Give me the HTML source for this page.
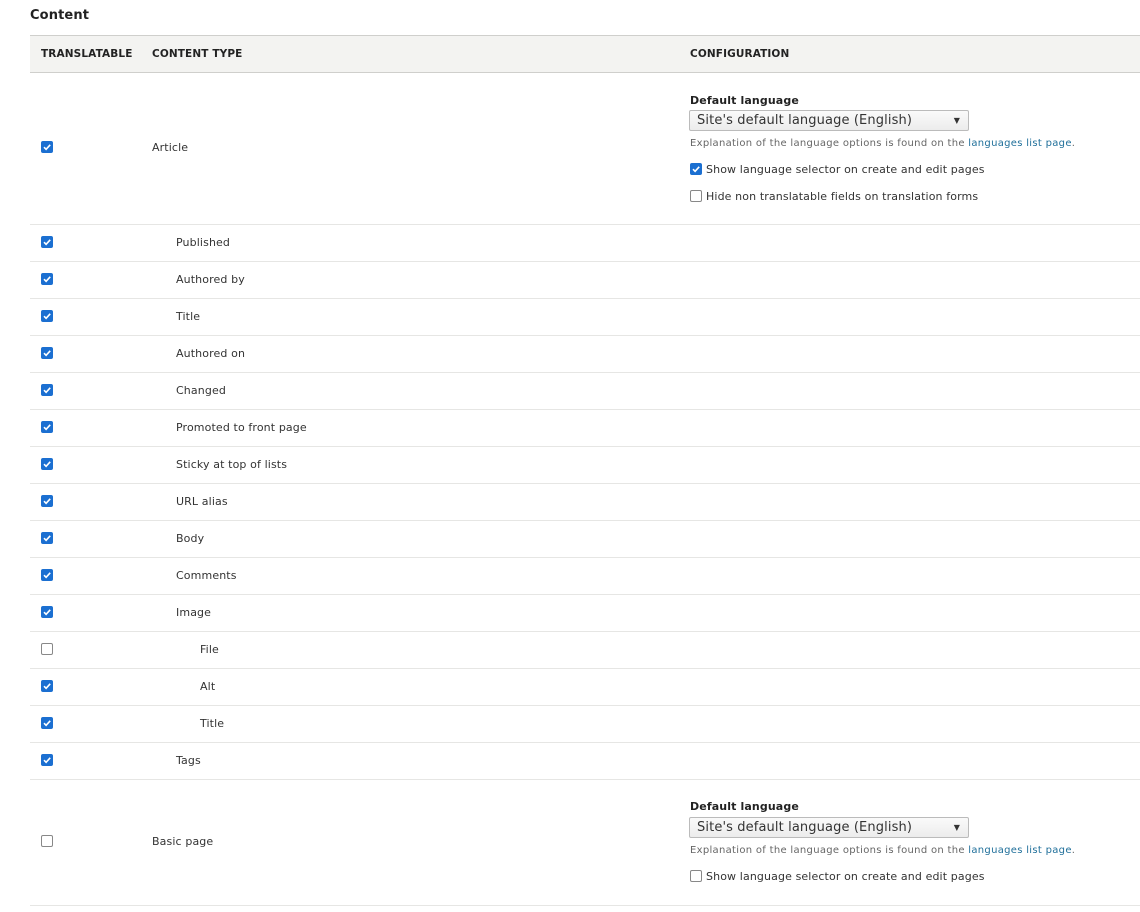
<!DOCTYPE html>
<html><head><meta charset="utf-8"><style>
*{margin:0;padding:0;box-sizing:border-box}
body{width:1140px;height:912px;background:#fff;position:relative;overflow:hidden;font-family:"DejaVu Sans","Liberation Sans",sans-serif;color:#333;font-size:11px;letter-spacing:.12px}
.a{position:absolute;white-space:nowrap;transform:translateY(1px)}
.line{position:absolute;left:30px;width:1110px;height:1px;background:#e6e6e4}
.cb{position:absolute;width:12px;height:12px;border-radius:2px}
.on{background:#1b6fd1}
.off{border:1px solid #888;background:#fff}
.sel{position:absolute;left:689px;width:280px;height:21px;border:1px solid #bbb;border-radius:2px;background:linear-gradient(#fafafa,#ececec);font-size:13px;padding:2px 0 0 7px;color:#333}
.sel:after{content:"▼";position:absolute;right:8px;top:5px;font-size:8px}
.desc{font-size:10px;color:#666;letter-spacing:.3px}
.desc b{font-weight:normal;color:#1f6f9a}
.h{font-weight:bold;font-size:10.5px;color:#222}
</style></head><body>
<div class="a" style="left:30px;top:7px;font-weight:bold;font-size:13px;color:#222">Content</div>
<div style="position:absolute;left:30px;top:35px;width:1110px;height:38px;background:#f3f3f1;border-top:1px solid #cfcfcc;border-bottom:1px solid #cfcfcc"></div>
<div class="a h" style="left:41px;top:47px">TRANSLATABLE</div>
<div class="a h" style="left:152px;top:47px">CONTENT TYPE</div>
<div class="a h" style="left:690px;top:47px">CONFIGURATION</div>

<svg width="0" height="0" style="position:absolute"><defs><symbol id="ck" viewBox="0 0 12 12"><path d="M3 6.2 L5.1 8.3 L9.2 3.8" fill="none" stroke="#fff" stroke-width="1.6"/></symbol></defs></svg>

<div class="cb on" style="left:41px;top:141px"><svg width="12" height="12"><use href="#ck"/></svg></div>
<div class="a" style="left:152px;top:140px">Article</div>
<div class="a h" style="left:690px;top:93px;font-size:11px">Default language</div>
<div class="sel" style="top:110px">Site's default language (English)</div>
<div class="a desc" style="left:690px;top:137px">Explanation of the language options is found on the <b>languages list page</b>.</div>
<div class="cb on" style="left:690px;top:163px"><svg width="12" height="12"><use href="#ck"/></svg></div>
<div class="a" style="left:706px;top:162px">Show language selector on create and edit pages</div>
<div class="cb off" style="left:690px;top:190px"></div>
<div class="a" style="left:706px;top:189px">Hide non translatable fields on translation forms</div>
<div class="line" style="top:224px"></div>

<div class="cb on" style="left:41px;top:236px"><svg width="12" height="12"><use href="#ck"/></svg></div><div class="a" style="left:176px;top:235px">Published</div><div class="line" style="top:261px"></div>
<div class="cb on" style="left:41px;top:273px"><svg width="12" height="12"><use href="#ck"/></svg></div><div class="a" style="left:176px;top:272px">Authored by</div><div class="line" style="top:298px"></div>
<div class="cb on" style="left:41px;top:310px"><svg width="12" height="12"><use href="#ck"/></svg></div><div class="a" style="left:176px;top:309px">Title</div><div class="line" style="top:335px"></div>
<div class="cb on" style="left:41px;top:347px"><svg width="12" height="12"><use href="#ck"/></svg></div><div class="a" style="left:176px;top:346px">Authored on</div><div class="line" style="top:372px"></div>
<div class="cb on" style="left:41px;top:384px"><svg width="12" height="12"><use href="#ck"/></svg></div><div class="a" style="left:176px;top:383px">Changed</div><div class="line" style="top:409px"></div>
<div class="cb on" style="left:41px;top:421px"><svg width="12" height="12"><use href="#ck"/></svg></div><div class="a" style="left:176px;top:420px">Promoted to front page</div><div class="line" style="top:446px"></div>
<div class="cb on" style="left:41px;top:458px"><svg width="12" height="12"><use href="#ck"/></svg></div><div class="a" style="left:176px;top:457px">Sticky at top of lists</div><div class="line" style="top:483px"></div>
<div class="cb on" style="left:41px;top:495px"><svg width="12" height="12"><use href="#ck"/></svg></div><div class="a" style="left:176px;top:494px">URL alias</div><div class="line" style="top:520px"></div>
<div class="cb on" style="left:41px;top:532px"><svg width="12" height="12"><use href="#ck"/></svg></div><div class="a" style="left:176px;top:531px">Body</div><div class="line" style="top:557px"></div>
<div class="cb on" style="left:41px;top:569px"><svg width="12" height="12"><use href="#ck"/></svg></div><div class="a" style="left:176px;top:568px">Comments</div><div class="line" style="top:594px"></div>
<div class="cb on" style="left:41px;top:606px"><svg width="12" height="12"><use href="#ck"/></svg></div><div class="a" style="left:176px;top:605px">Image</div><div class="line" style="top:631px"></div>
<div class="cb off" style="left:41px;top:643px"></div><div class="a" style="left:200px;top:642px">File</div><div class="line" style="top:668px"></div>
<div class="cb on" style="left:41px;top:680px"><svg width="12" height="12"><use href="#ck"/></svg></div><div class="a" style="left:200px;top:679px">Alt</div><div class="line" style="top:705px"></div>
<div class="cb on" style="left:41px;top:717px"><svg width="12" height="12"><use href="#ck"/></svg></div><div class="a" style="left:200px;top:716px">Title</div><div class="line" style="top:742px"></div>
<div class="cb on" style="left:41px;top:754px"><svg width="12" height="12"><use href="#ck"/></svg></div><div class="a" style="left:176px;top:753px">Tags</div><div class="line" style="top:779px"></div>

<div class="cb off" style="left:41px;top:835px"></div>
<div class="a" style="left:152px;top:834px">Basic page</div>
<div class="a h" style="left:690px;top:799px;font-size:11px">Default language</div>
<div class="sel" style="top:817px">Site's default language (English)</div>
<div class="a desc" style="left:690px;top:844px">Explanation of the language options is found on the <b>languages list page</b>.</div>
<div class="cb off" style="left:690px;top:870px"></div>
<div class="a" style="left:706px;top:869px">Show language selector on create and edit pages</div>
<div class="line" style="top:905px"></div>
</body></html>
